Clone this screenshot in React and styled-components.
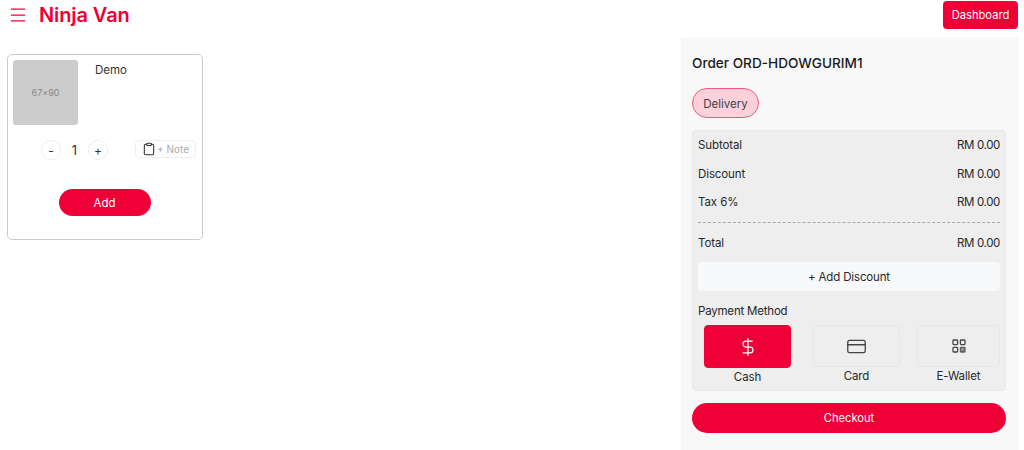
import React from 'react';
import styled, { createGlobalStyle } from 'styled-components';
import { Menu, DollarSign, CreditCard, Clipboard } from 'lucide-react';

const brand = '#ee0037';

const GlobalStyle = createGlobalStyle`
  html, body {
    margin: 0;
    padding: 0;
    background: #fff;
    font-family: Inter, "Liberation Sans", sans-serif;
    color: #27272a;
  }
  * { box-sizing: border-box; }
`;

const Page = styled.div`
  width: 1024px;
  height: 450px;
  display: flex;
  flex-direction: column;
  overflow: hidden;
`;

const Header = styled.header`
  height: 37px;
  display: flex;
  align-items: flex-start;
  justify-content: space-between;
  padding: 1px 6px 0 7px;
`;

const BrandGroup = styled.div`
  display: flex;
  align-items: center;
  gap: 11px;
  height: 27px;
  color: ${brand};
`;

const BrandIcon = styled(Menu)`
  width: 20px;
  height: 20px;
  margin-left: 1px;
  margin-right: 0;
`;

const BrandName = styled.span`
  font-size: 20px;
  font-weight: 600;
  letter-spacing: -0.1px;
`;

const DashboardButton = styled.button`
  width: 75px;
  height: 28px;
  border: 0;
  border-radius: 4px;
  background: ${brand};
  color: #fff;
  font: 400 11.2px Inter, sans-serif;
`;

const Main = styled.main`
  flex: 1;
  display: flex;
  justify-content: space-between;
  padding: 0 6px 0 7px;
`;

const ProductCard = styled.section`
  width: 196px;
  height: 186px;
  margin-top: 17px;
  padding: 5px 6px 0 5px;
  border: 1px solid #ccc;
  border-radius: 5px;
  display: flex;
  flex-direction: column;
`;

const ProductTop = styled.div`
  display: flex;
  gap: 17px;
`;

const Thumb = styled.div`
  width: 65px;
  height: 65px;
  border-radius: 3px;
  background: #cccccc;
  color: #888;
  font-size: 9px;
  display: flex;
  align-items: center;
  justify-content: center;
`;

const ProductName = styled.div`
  padding-top: 1px;
  font-size: 11.5px;
  line-height: 18px;
  color: #333;
`;

const QtyRow = styled.div`
  display: flex;
  align-items: center;
  margin-top: 15px;
  height: 20px;
  padding-left: 28px;
`;

const RoundButton = styled.button`
  width: 20px;
  height: 20px;
  padding: 0;
  border: 1px solid #eee;
  border-radius: 50%;
  background: #fff;
  color: #333;
  font: 400 12px Inter, sans-serif;
`;

const Qty = styled.span`
  width: 27px;
  text-align: center;
  font-size: 13px;
  color: #333;
`;

const NoteButton = styled.button`
  margin-left: 27px;
  width: 61px;
  height: 18px;
  margin-top: -2px;
  padding: 0;
  border: 1px solid #eee;
  border-radius: 4px;
  background: #fff;
  color: #aaa;
  font: 400 10px Inter, sans-serif;
  display: flex;
  align-items: center;
  justify-content: center;
  gap: 1px;
  svg { color: #333; }
`;

const AddButton = styled.button`
  align-self: center;
  width: 92px;
  height: 27px;
  margin-top: 29px;
  border: 0;
  border-radius: 14px;
  background: ${brand};
  color: #fff;
  font: 400 11.5px Inter, sans-serif;
`;

const OrderPanel = styled.aside`
  width: 337px;
  height: 413px;
  padding: 0 12px 0 11px;
  background: #f8f8f8;
  display: flex;
  flex-direction: column;
`;

const OrderTitle = styled.h2`
  margin: 17px 0 0;
  font-size: 13.6px;
  line-height: 19px;
  font-weight: 500;
  color: #18181b;
`;

const ModePill = styled.div`
  width: 67px;
  height: 30px;
  margin-top: 15px;
  padding-top: 1px;
  border: 1px solid #f8577f;
  border-radius: 15px;
  background: #fdd0dc;
  color: #3f3f46;
  font-size: 11.5px;
  display: flex;
  align-items: center;
  justify-content: center;
`;

const Summary = styled.div`
  height: 261px;
  margin-top: 12px;
  padding: 0 5px;
  background: #eeeeee;
  border: 1px solid #e8e8e8;
  border-radius: 4px;
  font-size: 11.5px;
  letter-spacing: -0.1px;
  color: #27272a;
`;

const Row = styled.div`
  height: 28.5px;
  display: flex;
  align-items: center;
  justify-content: space-between;
`;

const Amount = styled.span`
  letter-spacing: -0.35px;
`;

const Divider = styled.div`
  margin-top: 5px;
  border-top: 1px dashed #aaa;
`;

const TotalRow = styled(Row)`
  margin-top: 6px;
`;

const DiscountButton = styled.button`
  display: block;
  width: 100%;
  height: 29px;
  margin-top: 5px;
  border: 0;
  border-radius: 4px;
  background: #f8f9fb;
  color: #27272a;
  font: 400 11.5px Inter, sans-serif;
  letter-spacing: -0.15px;
`;

const PaymentLabel = styled.div`
  margin-top: 12px;
  line-height: 16px;
  letter-spacing: -0.2px;
`;

const Methods = styled.div`
  display: flex;
  margin-top: 6px;
  padding-left: 6px;
`;

const Method = styled.div`
  width: ${p => p.$width}px;
  margin-left: ${p => p.$gap}px;
  display: flex;
  flex-direction: column;
  align-items: center;
  gap: 2px;
  line-height: 15px;
`;

const MethodTile = styled.div`
  width: 100%;
  height: ${p => (p.$active ? '43px' : '42px')};
  border-radius: 4px;
  border: 1px solid ${p => (p.$active ? brand : '#e6e6e6')};
  background: ${p => (p.$active ? brand : 'transparent')};
  color: ${p => (p.$active ? '#fff' : '#444')};
  display: flex;
  align-items: center;
  justify-content: center;
`;

const CheckoutButton = styled.button`
  height: 30px;
  margin-top: 12px;
  border: 0;
  border-radius: 15px;
  background: ${brand};
  color: #fff;
  font: 400 11.2px Inter, sans-serif;
`;

// three outlined squares and a denser bottom-right one
const WalletIcon = ({ size }) => (
  <svg width={size} height={size} viewBox="0 0 14 14" fill="none" stroke="currentColor" strokeWidth="1.3">
    <rect x="1" y="1" width="4.6" height="4.6" rx="0.8" />
    <rect x="8.4" y="1" width="4.6" height="4.6" rx="0.8" />
    <rect x="1" y="8.4" width="4.6" height="4.6" rx="0.8" />
    <rect x="8.4" y="8.4" width="4.6" height="4.6" rx="0.5" fill="currentColor" fillOpacity="0.55" strokeOpacity="0.8" />
  </svg>
);

const rows = [
  ['Subtotal', 'RM 0.00'],
  ['Discount', 'RM 0.00'],
  ['Tax 6%', 'RM 0.00'],
];

const methods = [
  { name: 'Cash', Icon: DollarSign, size: 20, width: 87, gap: 0, active: true },
  { name: 'Card', Icon: CreditCard, size: 21, width: 87, gap: 22 },
  { name: 'E-Wallet', Icon: WalletIcon, size: 14, width: 83, gap: 17 },
];

const App = () => (
  <Page>
    <GlobalStyle />
    <Header>
      <BrandGroup>
        <BrandIcon strokeWidth={1.5} />
        <BrandName>Ninja Van</BrandName>
      </BrandGroup>
      <DashboardButton>Dashboard</DashboardButton>
    </Header>
    <Main>
      <ProductCard>
        <ProductTop>
          <Thumb>67×90</Thumb>
          <ProductName>Demo</ProductName>
        </ProductTop>
        <QtyRow>
          <RoundButton>-</RoundButton>
          <Qty>1</Qty>
          <RoundButton>+</RoundButton>
          <NoteButton>
            <Clipboard size={14} strokeWidth={1.8} />
            + Note
          </NoteButton>
        </QtyRow>
        <AddButton>Add</AddButton>
      </ProductCard>
      <OrderPanel>
        <OrderTitle>Order ORD-HDOWGURIM1</OrderTitle>
        <ModePill>Delivery</ModePill>
        <Summary>
          {rows.map(([label, value]) => (
            <Row key={label}>
              <span>{label}</span>
              <Amount>{value}</Amount>
            </Row>
          ))}
          <Divider />
          <TotalRow>
            <span>Total</span>
            <Amount>RM 0.00</Amount>
          </TotalRow>
          <DiscountButton>+ Add Discount</DiscountButton>
          <PaymentLabel>Payment Method</PaymentLabel>
          <Methods>
            {methods.map(({ name, Icon, size, width, gap, active }) => (
              <Method key={name} $width={width} $gap={gap}>
                <MethodTile $active={active}>
                  <Icon size={size} strokeWidth={1.5} />
                </MethodTile>
                {name}
              </Method>
            ))}
          </Methods>
        </Summary>
        <CheckoutButton>Checkout</CheckoutButton>
      </OrderPanel>
    </Main>
  </Page>
);

export default App;
